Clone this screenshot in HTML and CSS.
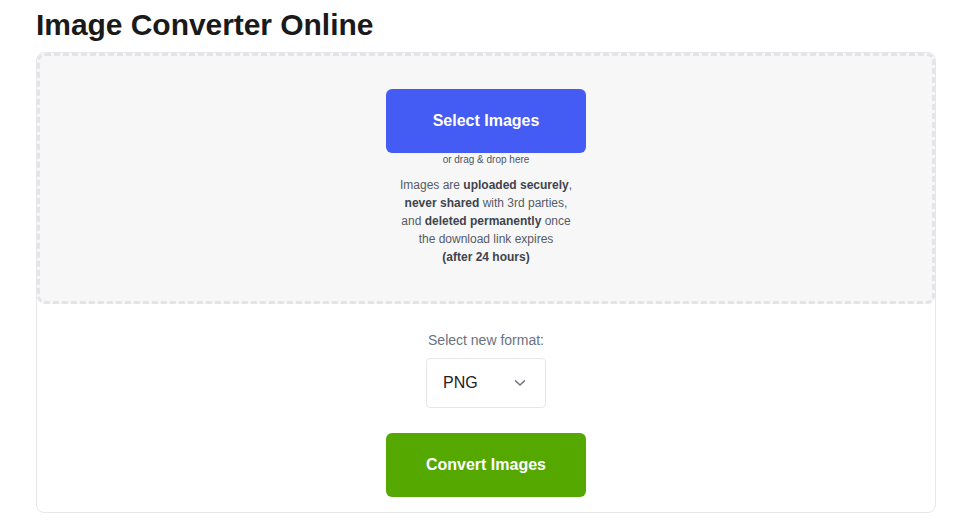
FILE: index.html
```html
<!DOCTYPE html>
<html lang="en">
<head>
<meta charset="utf-8">
<title>Image Converter Online</title>
<link rel="stylesheet" href="styles.css">
</head>
<body>
<main class="page">
  <h1 class="title">Image Converter Online</h1>
  <section class="card">
    <div class="dropzone">
      <button class="btn btn-select" type="button">Select Images</button>
      <div class="drag-hint">or drag &amp; drop here</div>
      <p class="privacy">
        Images are <b>uploaded securely</b>,<br>
        <b>never shared</b> with 3rd parties,<br>
        and <b>deleted permanently</b> once<br>
        the download link expires<br>
        <b>(after 24 hours)</b>
      </p>
    </div>
    <div class="options">
      <label class="format-label">Select new format:</label>
      <div class="select">
        <span class="select-value">PNG</span>
        <svg class="chevron" width="12" height="8" viewBox="0 0 12 8" aria-hidden="true">
          <path d="M1.5 1.8 L6 6 L10.5 1.8" fill="none" stroke="#6b7280" stroke-width="1.5" stroke-linecap="round" stroke-linejoin="round"/>
        </svg>
      </div>
      <button class="btn btn-convert" type="button">Convert Images</button>
    </div>
  </section>
</main>
</body>
</html>
```
FILE: styles.css
```css
* { box-sizing: border-box; }
html, body { margin: 0; padding: 0; background: #ffffff; }
body {
  font-family: "Liberation Sans", Arial, sans-serif;
  color: #1f2937;
}
.page {
  padding: 0 42px 0 36px;
}
.title {
  margin: 0;
  padding-top: 8px;
  font-size: 30px;
  line-height: 34px;
  font-weight: 700;
  color: #1a1a1a;
  letter-spacing: -0.05px;
}
.card {
  margin-top: 10px;
  width: 900px;
  border: 1px solid #e5e7eb;
  border-radius: 8px;
  display: flex;
  flex-direction: column;
  align-items: stretch;
  padding-bottom: 15px;
}
.dropzone {
  border: 3px dashed #e3e4e8;
  border-radius: 8px;
  background: #f7f7f8;
  height: 251px;
  padding-top: 33px;
  display: flex;
  flex-direction: column;
  align-items: center;
}
.btn {
  width: 200px;
  height: 64px;
  border: none;
  border-radius: 6px;
  color: #ffffff;
  font-family: "Liberation Sans", Arial, sans-serif;
  font-size: 16px;
  font-weight: 700;
  cursor: pointer;
}
.btn-select { background: #445cf3; }
.btn-convert { background: #55a800; margin-top: 25px; }
.drag-hint {
  margin-top: 1px;
  font-size: 10px;
  line-height: 12px;
  color: #4b5563;
}
.privacy {
  margin: 10px 0 0 0;
  text-align: center;
  font-size: 12px;
  line-height: 18px;
  color: #555b65;
}
.privacy b { color: #3f444c; font-weight: 700; }
.options {
  display: flex;
  flex-direction: column;
  align-items: center;
  padding-top: 26px;
}
.format-label {
  font-size: 14px;
  line-height: 20px;
  color: #6b7280;
}
.select {
  margin-top: 8px;
  width: 120px;
  height: 50px;
  border: 1px solid #e5e7eb;
  border-radius: 4px;
  background: #ffffff;
  display: flex;
  align-items: center;
  justify-content: space-between;
  padding: 0 19px 0 16px;
}
.select-value {
  font-size: 16px;
  color: #222222;
}
.chevron { display: block; }
```
